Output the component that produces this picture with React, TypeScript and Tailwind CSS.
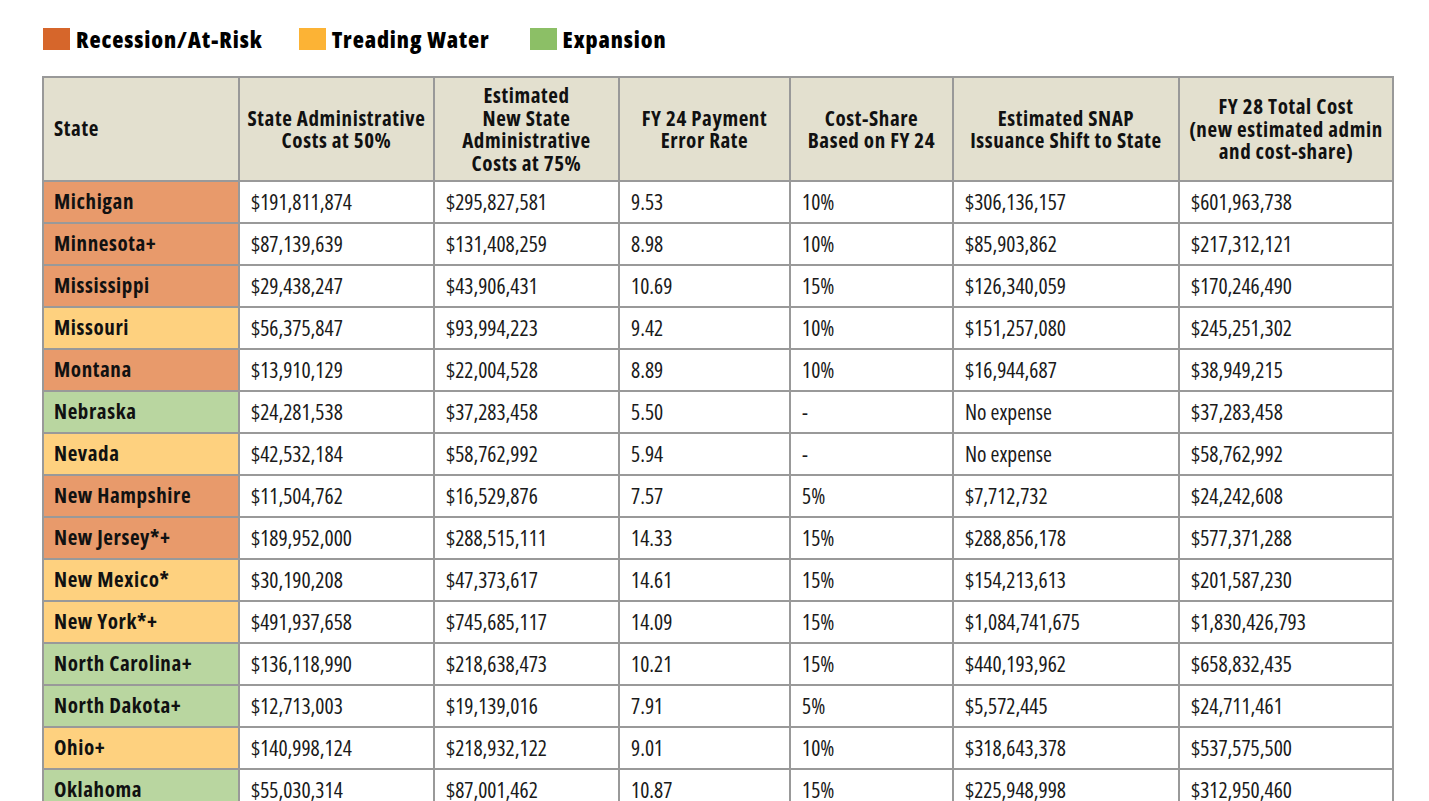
import React from "react";

type Tone = "r" | "y" | "g";

const rows: [string, Tone, string, string, string, string, string, string][] = [
  ["Michigan", "r", "$191,811,874", "$295,827,581", "9.53", "10%", "$306,136,157", "$601,963,738"],
  ["Minnesota+", "r", "$87,139,639", "$131,408,259", "8.98", "10%", "$85,903,862", "$217,312,121"],
  ["Mississippi", "r", "$29,438,247", "$43,906,431", "10.69", "15%", "$126,340,059", "$170,246,490"],
  ["Missouri", "y", "$56,375,847", "$93,994,223", "9.42", "10%", "$151,257,080", "$245,251,302"],
  ["Montana", "r", "$13,910,129", "$22,004,528", "8.89", "10%", "$16,944,687", "$38,949,215"],
  ["Nebraska", "g", "$24,281,538", "$37,283,458", "5.50", "-", "No expense", "$37,283,458"],
  ["Nevada", "y", "$42,532,184", "$58,762,992", "5.94", "-", "No expense", "$58,762,992"],
  ["New Hampshire", "r", "$11,504,762", "$16,529,876", "7.57", "5%", "$7,712,732", "$24,242,608"],
  ["New Jersey*+", "r", "$189,952,000", "$288,515,111", "14.33", "15%", "$288,856,178", "$577,371,288"],
  ["New Mexico*", "y", "$30,190,208", "$47,373,617", "14.61", "15%", "$154,213,613", "$201,587,230"],
  ["New York*+", "y", "$491,937,658", "$745,685,117", "14.09", "15%", "$1,084,741,675", "$1,830,426,793"],
  ["North Carolina+", "g", "$136,118,990", "$218,638,473", "10.21", "15%", "$440,193,962", "$658,832,435"],
  ["North Dakota+", "g", "$12,713,003", "$19,139,016", "7.91", "5%", "$5,572,445", "$24,711,461"],
  ["Ohio+", "y", "$140,998,124", "$218,932,122", "9.01", "10%", "$318,643,378", "$537,575,500"],
  ["Oklahoma", "g", "$55,030,314", "$87,001,462", "10.87", "15%", "$225,948,998", "$312,950,460"],
];

const toneBg: Record<Tone, string> = {
  r: "bg-[#e89a6b]",
  y: "bg-[#fed17f]",
  g: "bg-[#b9d6a0]",
};

const widths = ["w-[196px]", "w-[195px]", "w-[185px]", "w-[171px]", "w-[163px]", "w-[226px]", "w-[214px]"];

const headerLines: string[][] = [
  ["State Administrative", "Costs at 50%"],
  ["Estimated", "New State", "Administrative", "Costs at 75%"],
  ["FY 24 Payment", "Error Rate"],
  ["Cost-Share", "Based on FY 24"],
  ["Estimated SNAP", "Issuance Shift to State"],
  ["FY 28 Total Cost", "(new estimated admin", "and cost-share)"],
];

function LegendItem({ color, label }: { color: string; label: string }) {
  return (
    <div className="flex items-center gap-[6px]">
      <span className={`block h-[22px] w-[27px] ${color}`} />
      <span className="whitespace-nowrap text-[23px] font-extrabold leading-[22px] tracking-[0.9px] text-black">
        {label}
      </span>
    </div>
  );
}

export default function App() {
  return (
    <main className="min-h-screen overflow-hidden bg-white pt-[28px] font-['Open_Sans',sans-serif] text-[#1a1a1a] [font-stretch:75%]">
      <div className="ml-[43px] flex items-center">
        <LegendItem color="bg-[#d6662b]" label="Recession/At-Risk" />
        <div className="w-[36px]" />
        <LegendItem color="bg-[#fcb335]" label="Treading Water" />
        <div className="w-[40px]" />
        <LegendItem color="bg-[#8cbf66]" label="Expansion" />
      </div>

      <table className="mt-[26px] ml-[42px] w-[1352px] table-fixed border-collapse">
        <colgroup>
          {widths.map((w, i) => (
            <col key={i} className={w} />
          ))}
        </colgroup>
        <thead>
          <tr className="h-[104px] bg-[#e3e0cf]">
            <th className="border-2 border-[#999] pl-[10px] text-left align-middle text-[21px] font-bold tracking-[0.6px] text-[#111]">
              State
            </th>
            {headerLines.map((lines, i) => (
              <th
                key={i}
                className="border-2 border-[#999] px-1 text-center align-middle text-[21px] leading-[22.5px] font-bold tracking-[0.6px] text-[#111]"
              >
                {lines.map((l) => (
                  <div key={l} className="whitespace-nowrap">
                    {l}
                  </div>
                ))}
              </th>
            ))}
          </tr>
        </thead>
        <tbody>
          {rows.map(([state, tone, ...vals]) => (
            <tr key={state} className="h-[42px]">
              <td
                className={`whitespace-nowrap border-2 border-[#999] pl-[10px] align-middle text-[21px] font-bold tracking-[0.6px] text-[#111] ${toneBg[tone]}`}
              >
                {state}
              </td>
              {vals.map((v, i) => (
                <td key={i} className="whitespace-nowrap border-2 border-[#999] bg-white pl-[11px] align-middle text-[21.5px]">
                  {v}
                </td>
              ))}
            </tr>
          ))}
        </tbody>
      </table>
    </main>
  );
}
